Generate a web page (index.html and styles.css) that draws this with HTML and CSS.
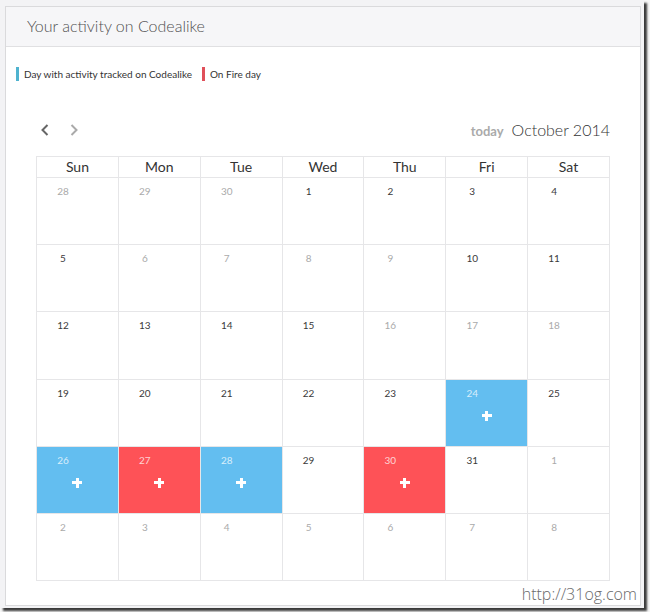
FILE: index.html
```html
<!DOCTYPE html>
<html>
<head>
<meta charset="utf-8">
<link rel="stylesheet" href="styles.css">
</head>
<body>
<div class="frame">
  <div class="panel">
    <div class="panel-head">Your activity on Codealike</div>
    <div class="legend">
      <span class="legend-item blue">Day with activity tracked on Codealike</span>
      <span class="legend-item red">On Fire day</span>
    </div>
    <div class="cal">
      <div class="toolbar">
        <div class="nav">
          <svg class="chev dark" width="10" height="14" viewBox="0 0 10 14"><path d="M7.5 2 L2.5 7 L7.5 12" fill="none" stroke="currentColor" stroke-width="2"/></svg>
          <svg class="chev light" width="10" height="14" viewBox="0 0 10 14"><path d="M2.5 2 L7.5 7 L2.5 12" fill="none" stroke="currentColor" stroke-width="2"/></svg>
        </div>
        <div class="title-wrap">
          <span class="today">today</span>
          <span class="month">October 2014</span>
        </div>
      </div>
      <table class="grid">
        <thead>
          <tr><th>Sun</th><th>Mon</th><th>Tue</th><th>Wed</th><th>Thu</th><th>Fri</th><th>Sat</th></tr>
        </thead>
        <tbody>
          <tr>
            <td class="other"><span class="num">28</span></td>
            <td class="other"><span class="num">29</span></td>
            <td class="other"><span class="num">30</span></td>
            <td><span class="num">1</span></td>
            <td><span class="num">2</span></td>
            <td><span class="num">3</span></td>
            <td><span class="num">4</span></td>
          </tr>
          <tr>
            <td><span class="num">5</span></td>
            <td class="other"><span class="num">6</span></td>
            <td class="other"><span class="num">7</span></td>
            <td class="other"><span class="num">8</span></td>
            <td class="other"><span class="num">9</span></td>
            <td><span class="num">10</span></td>
            <td><span class="num">11</span></td>
          </tr>
          <tr>
            <td><span class="num">12</span></td>
            <td><span class="num">13</span></td>
            <td><span class="num">14</span></td>
            <td><span class="num">15</span></td>
            <td class="other"><span class="num">16</span></td>
            <td class="other"><span class="num">17</span></td>
            <td class="other"><span class="num">18</span></td>
          </tr>
          <tr>
            <td><span class="num">19</span></td>
            <td><span class="num">20</span></td>
            <td><span class="num">21</span></td>
            <td><span class="num">22</span></td>
            <td><span class="num">23</span></td>
            <td class="act"><span class="num">24</span><span class="plus"></span></td>
            <td><span class="num">25</span></td>
          </tr>
          <tr>
            <td class="act"><span class="num">26</span><span class="plus"></span></td>
            <td class="fire"><span class="num">27</span><span class="plus"></span></td>
            <td class="act"><span class="num">28</span><span class="plus"></span></td>
            <td><span class="num">29</span></td>
            <td class="fire"><span class="num">30</span><span class="plus"></span></td>
            <td><span class="num">31</span></td>
            <td class="other"><span class="num">1</span></td>
          </tr>
          <tr>
            <td class="other"><span class="num">2</span></td>
            <td class="other"><span class="num">3</span></td>
            <td class="other"><span class="num">4</span></td>
            <td class="other"><span class="num">5</span></td>
            <td class="other"><span class="num">6</span></td>
            <td class="other"><span class="num">7</span></td>
            <td class="other"><span class="num">8</span></td>
          </tr>
        </tbody>
      </table>
    </div>
    <div class="watermark">http://31og.com</div>
  </div>
</div>
</body>
</html>
```

FILE: styles.css
```css
html, body {
  margin: 0;
  padding: 0;
  background: #f6f6f6;
}
body {
  width: 650px;
  height: 612px;
  overflow: hidden;
  font-family: Lato, "Noto Sans", sans-serif;
}
.frame {
  width: 644px;
  height: 608px;
  box-sizing: border-box;
  padding: 6px 0 0 5px;
  background: #f3f3f5;
  box-shadow: 3px 3px 2px #3a3a3a;
}
.panel {
  width: 636px;
  height: 600px;
  box-sizing: border-box;
  border: 1px solid #dadadc;
  background: #fff;
  display: flex;
  flex-direction: column;
}
.panel-head {
  height: 40px;
  box-sizing: border-box;
  border-bottom: 1px solid #e0e0e2;
  background: #f6f6f8;
  padding-left: 21px;
  font-size: 16px;
  font-weight: 300;
  color: #505050;
  line-height: 38px;
}
.legend {
  margin-top: 20px;
  padding-left: 10px;
  display: flex;
  gap: 10px;
  height: 14px;
}
.legend-item {
  font-size: 10px;
  color: #333;
  line-height: 14px;
  padding-left: 5px;
  border-left: 3px solid #4fb3cf;
}
.legend-item.red {
  border-left-color: #e0505a;
}
.cal {
  margin: 37px 30px 0 30px;
}
.toolbar {
  display: flex;
  justify-content: space-between;
  align-items: center;
  height: 24px;
  margin-bottom: 14px;
}
.nav {
  display: flex;
  gap: 19px;
  padding-left: 4px;
}
.chev.dark { color: #666; }
.chev.light { color: #aaa; }
.title-wrap {
  display: flex;
  align-items: baseline;
  gap: 8px;
  margin-top: -2px;
}
.today {
  font-size: 13px;
  font-weight: 700;
  color: #aaa;
}
.month {
  font-size: 16px;
  font-weight: 300;
  color: #333;
}
.grid {
  width: 574px;
  border-collapse: collapse;
  table-layout: fixed;
}
.grid th {
  height: 20px;
  border: 1px solid #e6e6e8;
  font-size: 14px;
  font-weight: 400;
  color: #333;
  padding: 0;
  line-height: 20px;
}
.grid td {
  height: 66.2px;
  border: 1px solid #e6e6e8;
  padding: 0;
  vertical-align: top;
}
.num {
  display: block;
  width: 30px;
  margin: 6px 0 0 11px;
  text-align: center;
  font-size: 10px;
  line-height: 14px;
  color: #3a3a3a;
}
.other .num {
  color: #aaa;
}
.act {
  background: #63bef0;
}
.fire {
  background: #fe5257;
}
.act .num, .fire .num {
  color: rgba(255, 255, 255, 0.75);
}
.plus {
  display: block;
  width: 10px;
  height: 10px;
  margin: 11px auto 0;
  background:
    linear-gradient(#fff, #fff) center / 10px 3px no-repeat,
    linear-gradient(#fff, #fff) center / 3px 10px no-repeat;
}
.watermark {
  margin-top: auto;
  text-align: right;
  padding-right: 3px;
  font-family: "Open Sans", sans-serif;
  font-weight: 300;
  font-size: 16px;
  color: #6a6a6a;
  line-height: 22px;
}
```
